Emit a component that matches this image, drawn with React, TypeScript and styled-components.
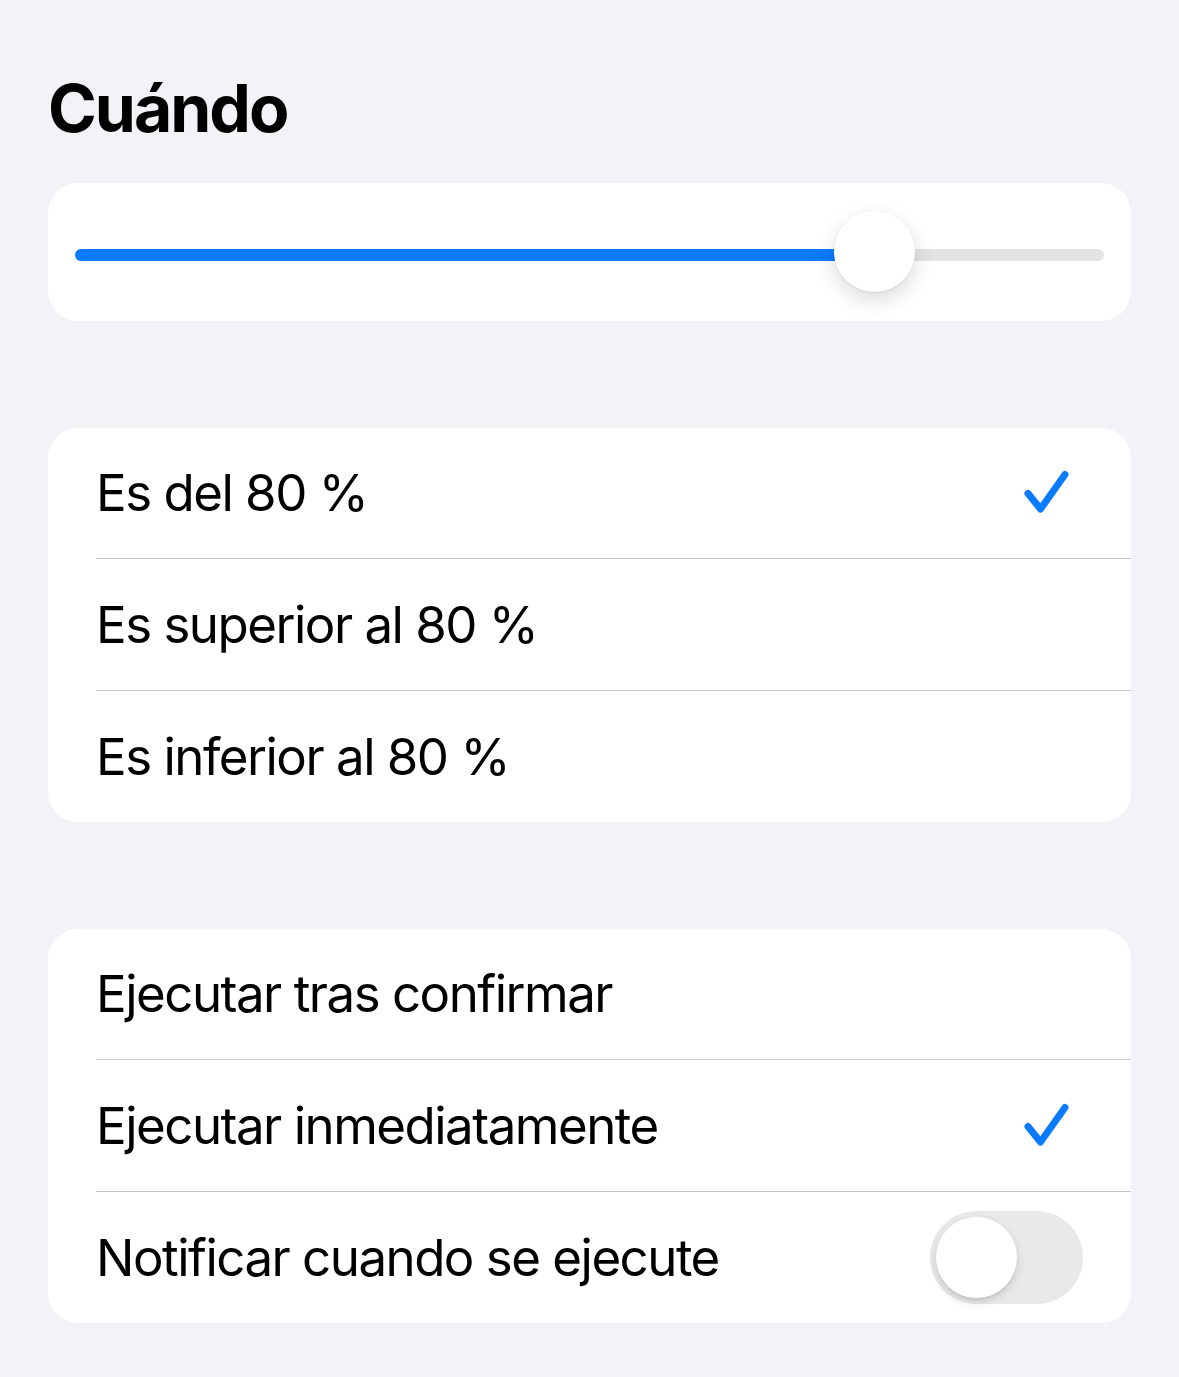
import React from 'react';
import styled, {createGlobalStyle} from 'styled-components';

const GlobalStyle = createGlobalStyle`
  html, body {
    margin: 0;
    padding: 0;
    background: #f2f2f7;
  }
  body {
    font-family: Inter, "Noto Sans", "Liberation Sans", sans-serif;
    color: #000;
    -webkit-font-smoothing: antialiased;
  }
`;

const Page = styled.div`
  width: 1179px;
  min-height: 1377px;
  box-sizing: border-box;
  padding: 75px 48px 54px;
  background: #f2f2f7;
`;

const Title = styled.h1`
  margin: 0 0 42px;
  font-size: 66px;
  line-height: 66px;
  font-weight: 700;
  letter-spacing: -2px;
`;

// tarjeta blanca redondeada
const Card = styled.section`
  background: #fff;
  border-radius: 30px;
  overflow: hidden;
`;

const Gap = styled.div`
  height: 107px;
`;

const SliderCard = styled(Card)`
  height: 138px;
  padding: 6px 27px 0;
  display: flex;
  align-items: center;
  box-sizing: border-box;
  overflow: visible;
`;

const Track = styled.div`
  position: relative;
  flex: 1;
  height: 12px;
  border-radius: 6px;
  background: #e3e3e6;
`;

const Fill = styled.div<{$value: number}>`
  height: 100%;
  width: ${p => p.$value}%;
  border-radius: 6px;
  background: #0a7aff;
`;

const Thumb = styled.div<{$value: number}>`
  position: absolute;
  top: 50%;
  left: ${p => p.$value}%;
  width: 81px;
  height: 81px;
  margin: -44px 0 0 -40.5px;
  border-radius: 50%;
  background: #fff;
  box-shadow: 0 8px 22px rgba(0, 0, 0, 0.14), 0 1px 3px rgba(0, 0, 0, 0.06);
`;

const Row = styled.div`
  padding-left: 48px;

  &:last-child > div {
    border-bottom: none;
  }
`;

const RowInner = styled.div<{$tall?: boolean}>`
  height: ${p => (p.$tall ? 132 : 131)}px;
  box-sizing: border-box;
  border-bottom: 1px solid #c8c8cc;
  display: flex;
  align-items: center;
  justify-content: space-between;
  padding-right: 48px;
`;

const Label = styled.span`
  font-size: 51px;
  line-height: 60px;
  letter-spacing: -1.5px;
`;

const Check = styled.svg`
  width: 52px;
  height: 52px;
  margin-right: 12px;
  flex: none;
`;

const Toggle = styled.div<{$on?: boolean}>`
  width: 153px;
  height: 93px;
  border-radius: 47px;
  background: ${p => (p.$on ? '#34c759' : '#e9e9ea')};
  padding: 6px;
  box-sizing: border-box;
  display: flex;
  justify-content: ${p => (p.$on ? 'flex-end' : 'flex-start')};
`;

const Knob = styled.div`
  width: 81px;
  height: 81px;
  border-radius: 50%;
  background: #fff;
  box-shadow: 0 4px 10px rgba(0, 0, 0, 0.13), 0 3px 1px rgba(0, 0, 0, 0.04);
`;

function CheckMark() {
    return (
        <Check viewBox="0 0 52 52">
            <path d="M9 26.5 L21.5 42 L46 7.5" fill="none" stroke="#0a7aff" strokeWidth="7"
                  strokeLinecap="round" strokeLinejoin="round"/>
        </Check>
    );
}

type Option = { label: string; checked?: boolean; toggle?: boolean };

const conditions: Option[] = [
    {label: 'Es del 80 %', checked: true},
    {label: 'Es superior al 80 %'},
    {label: 'Es inferior al 80 %'},
];

const actions: Option[] = [
    {label: 'Ejecutar tras confirmar'},
    {label: 'Ejecutar inmediatamente', checked: true},
    {label: 'Notificar cuando se ejecute', toggle: true},
];

function OptionList({items}: { items: Option[] }) {
    return (
        <Card>
            {items.map((item, i) =>
                <Row key={item.label}>
                    <RowInner $tall={i === 1}>
                        <Label>{item.label}</Label>
                        {item.checked && <CheckMark/>}
                        {item.toggle && <Toggle><Knob/></Toggle>}
                    </RowInner>
                </Row>
            )}
        </Card>
    );
}

export default function App() {
    const level = 77.65;
    return (
        <Page>
            <GlobalStyle/>
            <Title>Cuándo</Title>
            <SliderCard>
                <Track>
                    <Fill $value={level}/>
                    <Thumb $value={level}/>
                </Track>
            </SliderCard>
            <Gap/>
            <OptionList items={conditions}/>
            <Gap/>
            <OptionList items={actions}/>
        </Page>
    );
}
